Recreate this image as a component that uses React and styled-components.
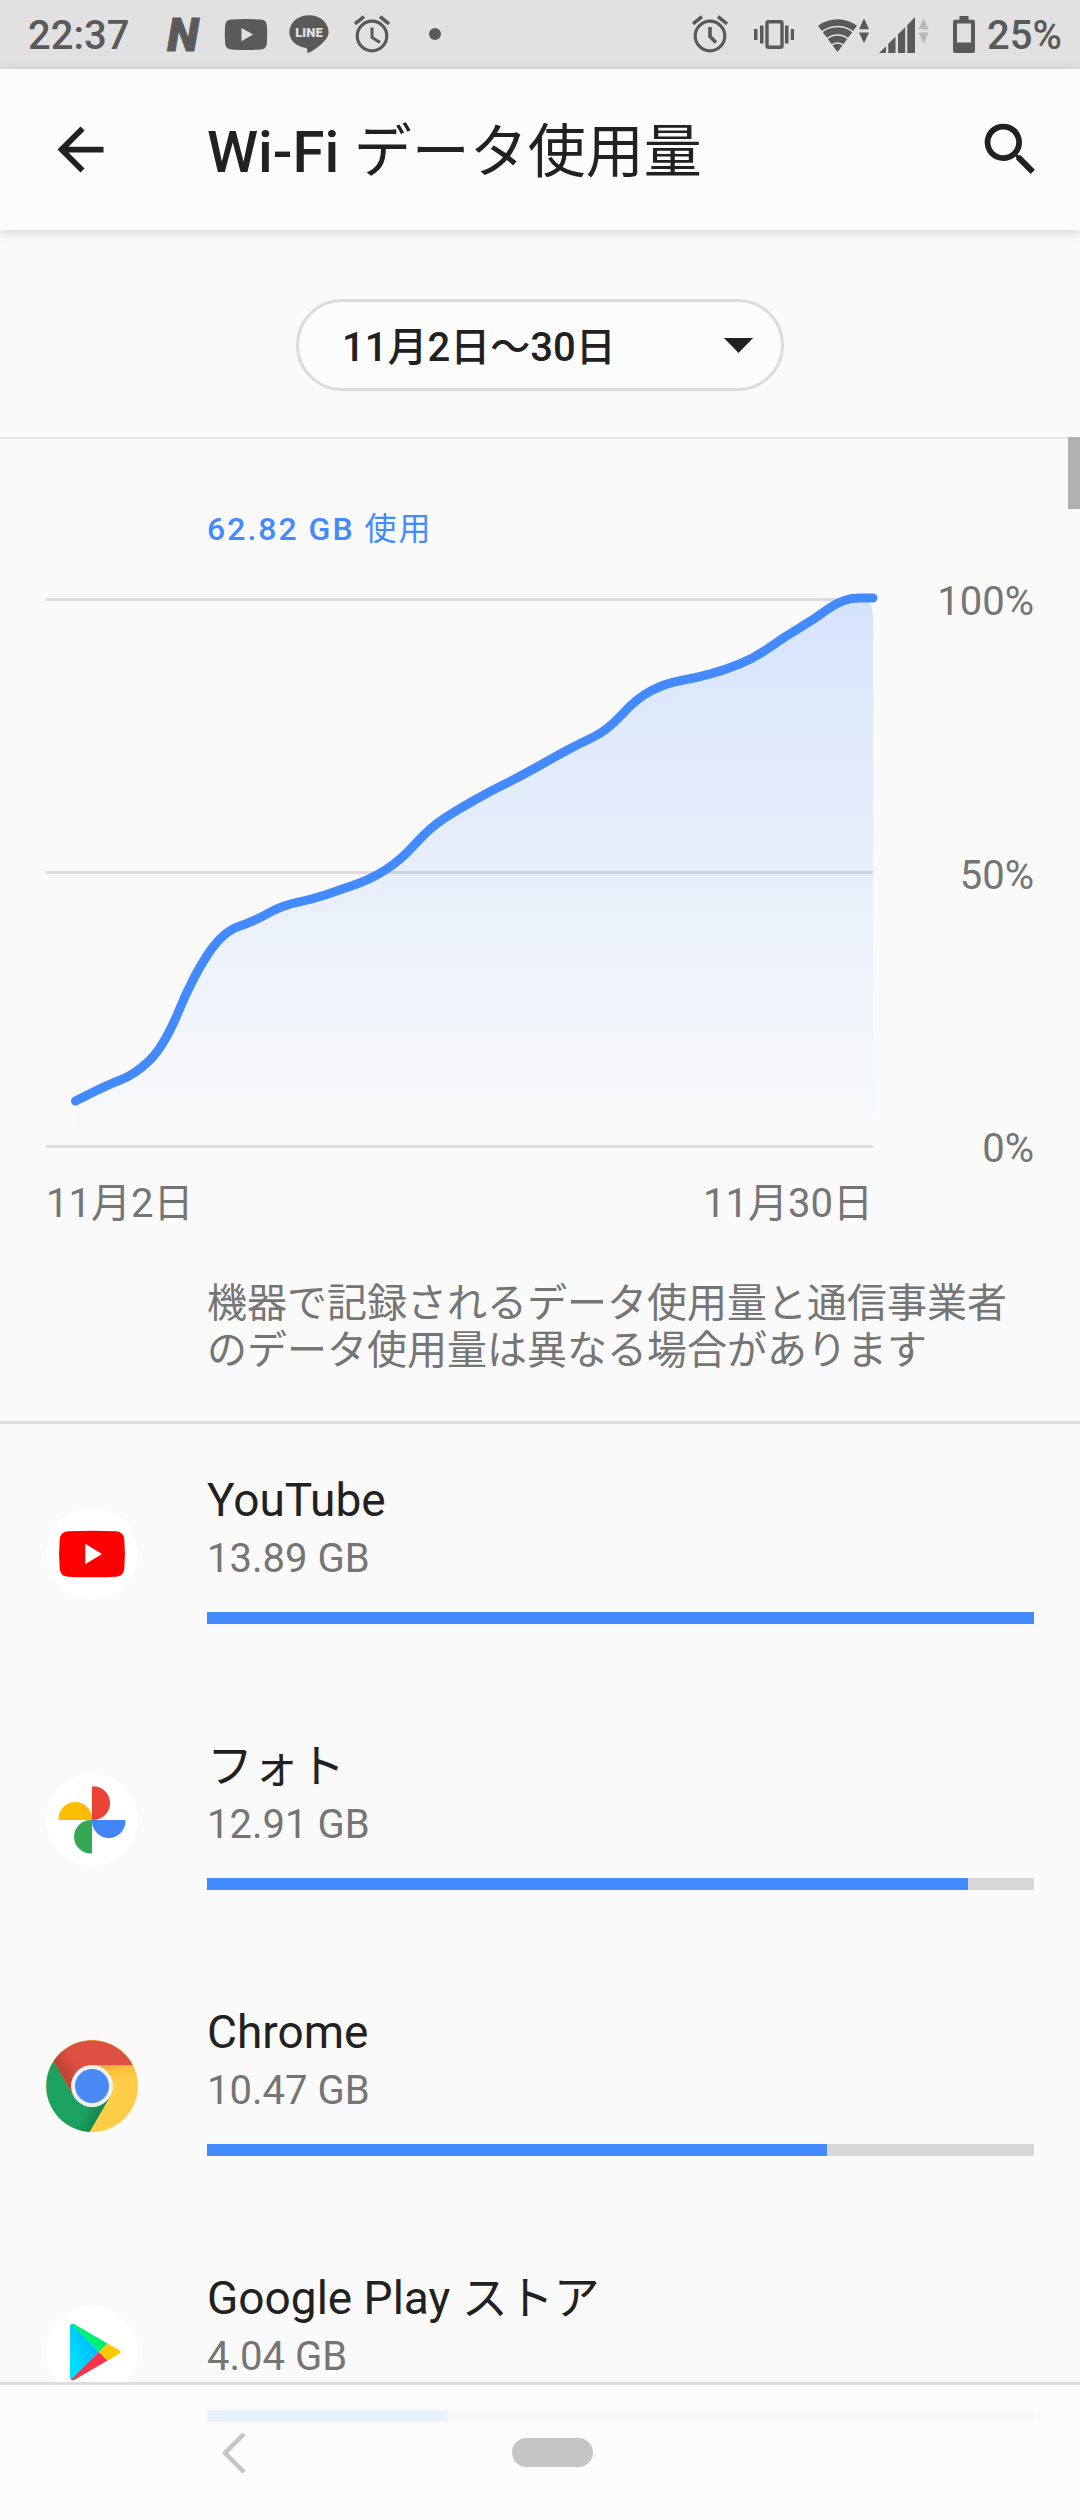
import React from 'react';
import styled, { ThemeProvider, createGlobalStyle } from 'styled-components';

const theme = {
  colors: {
    page: '#fafafa',
    surface: '#fcfcfc',
    statusBar: '#e1e1e1',
    status: '#5a5a5a',
    text: '#212121',
    secondary: '#757575',
    accent: '#448aff',
    divider: '#dcdce0',
    border: '#dcdcdc',
    track: '#d8d8d8',
    nav: '#c5c5c5',
  },
  edge: '46px',
};

const GlobalStyle = createGlobalStyle`
  * {
    box-sizing: border-box;
  }

  body {
    margin: 0;
    background: #fafafa;
    color: #212121;
    font-family: Roboto, 'Noto Sans CJK JP', sans-serif;
    font-size: 40px;
    line-height: 47px;
  }

  svg {
    display: block;
    flex: none;
  }
`;

const Screen = styled.div`
  min-height: 100vh;
  background: ${p => p.theme.colors.page};
`;

/* status bar */

const StatusBar = styled.div`
  display: flex;
  justify-content: space-between;
  align-items: flex-start;
  height: 69px;
  padding: 14px 18px 0 28px;
  background: ${p => p.theme.colors.statusBar};
  color: ${p => p.theme.colors.status};
  font-weight: 500;
  line-height: 44px;
`;

const Notifications = styled.div`
  display: flex;
`;

const Clock = styled.time`
  margin-right: 22px;
`;

const NotificationSlot = styled.span`
  display: flex;
  justify-content: center;
  width: 63px;
`;

const SystemIcons = styled.div`
  display: flex;
  gap: 24px;
`;

const Network = styled.span`
  display: flex;
  gap: 10px;
`;

const Battery = styled.span`
  display: flex;
  gap: 12px;
`;

/* header */

const Header = styled.header`
  position: relative;
  display: flex;
  align-items: flex-start;
  height: 161px;
  padding: 46px 35px 0 ${p => p.theme.edge};
  background: ${p => p.theme.colors.surface};
  box-shadow: 0 2px 10px rgba(0, 0, 0, 0.16);
`;

const IconButton = styled.button`
  flex: none;
  padding: 0;
  border: 0;
  background: none;
  color: ${p => p.theme.colors.text};
`;

const Title = styled.h1`
  flex: 1;
  margin: 0 0 0 92px;
  font-size: 58px;
  font-weight: 500;
  line-height: 74px;
`;

const Kana = styled.span`
  font-weight: 400;
`;

/* billing cycle */

const Cycle = styled.div`
  display: flex;
  justify-content: center;
  padding: 69px 0 46px;
  border-bottom: 2px solid #e8e8e8;
`;

const SelectWrap = styled.label`
  position: relative;
  width: 488px;

  svg {
    position: absolute;
    top: 39px;
    right: 31px;
    pointer-events: none;
  }
`;

const Select = styled.select`
  appearance: none;
  display: block;
  width: 100%;
  height: 92px;
  padding: 4px 80px 0 43px;
  border: 3px solid ${p => p.theme.colors.border};
  border-radius: 46px;
  background: ${p => p.theme.colors.surface};
  color: ${p => p.theme.colors.text};
  font: inherit;
  font-weight: 500;
`;

/* usage */

const Content = styled.main`
  position: relative;
`;

const ScrollThumb = styled.div`
  position: absolute;
  top: -2px;
  right: 0;
  width: 12px;
  height: 72px;
  background: #b1b1b1;
`;

const Usage = styled.section`
  padding: 71px ${p => p.theme.edge} 47px;
  border-bottom: 3px solid ${p => p.theme.colors.divider};
  color: ${p => p.theme.colors.secondary};
`;

const Total = styled.h2`
  margin: 0 0 30px 161px;
  color: ${p => p.theme.colors.accent};
  font-size: 32px;
  font-weight: 500;
  line-height: 38px;
  letter-spacing: 2px;
`;

const ChartGrid = styled.div`
  display: grid;
  grid-template-columns: 1fr 161px;
  row-gap: 8px;
`;

const Plot = styled.div`
  padding: 20px 0 24px;

  svg {
    width: 100%;
    height: auto;
    overflow: visible;
  }
`;

const Scale = styled.div`
  display: flex;
  flex-direction: column;
  justify-content: space-between;
  text-align: right;
`;

const Dates = styled.div`
  display: flex;
  justify-content: space-between;
`;

const Note = styled.p`
  margin: 53px 0 0 161px;
`;

/* app list */

const AppList = styled.ul`
  margin: 0;
  padding: 0;
  list-style: none;
`;

const AppRow = styled.li`
  display: grid;
  grid-template-columns: 92px 1fr;
  column-gap: 69px;
  padding: 49px ${p => p.theme.edge} 66px;

  > svg {
    margin-top: 35px;
  }
`;

const AppName = styled.h3`
  margin: 0 0 8px;
  font-size: 46px;
  font-weight: 400;
  line-height: 54px;
`;

const AppUsage = styled.p`
  margin: 0 0 30px;
  color: ${p => p.theme.colors.secondary};
`;

const Track = styled.div`
  height: 12px;
  background: ${p => p.theme.colors.track};
`;

const Fill = styled.div`
  height: 100%;
  background: ${p => p.theme.colors.accent};
`;

/* navigation bar */

const NavBar = styled.nav`
  position: fixed;
  right: 0;
  bottom: 0;
  left: 0;
  display: grid;
  grid-template-columns: repeat(3, 1fr);
  place-items: center;
  height: 138px;
  padding: 0 51px 0 75px;
  border-top: 3px solid ${p => p.theme.colors.border};
  background: rgba(252, 252, 252, 0.9);
  background-clip: padding-box;
`;

const NavButton = styled(IconButton)`
  color: ${p => p.theme.colors.nav};
`;

const HomePill = styled.button`
  width: 81px;
  height: 29px;
  padding: 0;
  border: 0;
  border-radius: 15px;
  background: ${p => p.theme.colors.nav};
`;

/* icons */

const GlyphSvg = styled.svg`
  overflow: visible;
`;

const AlarmIcon = ({ hands, weight = 3 }) => (
  <svg width="40" height="40" viewBox="0 0 40 40" fill="none" stroke="currentColor">
    <circle cx="20" cy="22" r="14.8" strokeWidth="3.2" />
    <path d="M3 9.8l9-7.2M28 2.6l9 7.2" strokeWidth="3.6" />
    <path d={hands} strokeWidth={weight} />
  </svg>
);

const NewsIcon = () => (
  <GlyphSvg width="44" height="40" viewBox="0 0 44 40" fill="currentColor">
    <text
      x="22"
      y="37"
      textAnchor="middle"
      fontFamily="Roboto"
      fontSize="46"
      fontWeight="900"
      fontStyle="italic"
      stroke="currentColor"
    >
      N
    </text>
  </GlyphSvg>
);

const VideoIcon = () => (
  <svg width="44" height="40" viewBox="0 0 44 40">
    <path
      fill="currentColor"
      d="M7 5.6q15-1 30 0 5.3.4 5.8 5.4.8 9.5 0 19-.5 5-5.8 5.4-15 1-30 0-5.3-.4-5.8-5.4-.8-9.5 0-19 .5-5 5.8-5.400z"
    />
    <path fill="#e1e1e1" d="M17.5 14v13.2L29 20.6z" />
  </svg>
);

const LineIcon = () => (
  <svg width="40" height="40" viewBox="0 0 40 40">
    <path
      fill="currentColor"
      d="M20 1.2C9.2 1.2.4 8.6.4 18c0 8 6.4 14.4 15.6 15.8 2.4.4 2.7 1.3 2.3 5.4 5-1.6 12.5-7 16.9-12 3-3.2 4.400-5.8 4.400-9.2C39.6 8.600 30.800 1.200 20 1.200z"
    />
    <text x="20" y="23" textAnchor="middle" fill="#e1e1e1" fontFamily="Roboto" fontSize="13" fontWeight="900">
      LINE
    </text>
  </svg>
);

const DotIcon = () => (
  <svg width="12" height="40" viewBox="0 0 12 40" fill="currentColor">
    <circle cx="6" cy="20" r="6" />
  </svg>
);

const VibrateIcon = () => (
  <svg width="40" height="40" viewBox="0 0 40 40" fill="currentColor">
    <rect x="13" y="7.7" width="15" height="25.6" rx="1.5" fill="none" stroke="currentColor" strokeWidth="3.4" />
    <path d="M0 15h3.500v11H0zM6 11.500h3.500v18H6zM31 11.500h3.500v18H31zM36.800 15h3.200v11h-3.200z" />
  </svg>
);

const WifiIcon = () => (
  <svg width="51" height="40" viewBox="0 0 51 40" fill="currentColor">
    <path d="M0 11.8a32.500 32.500 0 0 1 39 0L19.500 38z" />
    <g fill="none" stroke="#e1e1e1" strokeWidth="1.5">
      <circle cx="19.5" cy="38" r="25.5" />
      <circle cx="19.5" cy="38" r="17" />
      <circle cx="19.5" cy="38" r="9" />
    </g>
    <path d="M41 15.300l5-11 5 11zM41 18.500h10l-5 10.800z" />
  </svg>
);

const SignalIcon = () => (
  <svg width="50" height="40" viewBox="0 0 50 40" fill="currentColor">
    <path d="M0 39L7 32.200V39zM9.300 39V29.800l7.200-7V39zM19 39V20.300l7.200-7V39zM28.300 39V11l7.700-8v36z" />
    <path fill="#b8b8b8" d="M39.500 15.300l5-11 5 11zM39.500 18.500h10l-5 10.800z" />
  </svg>
);

const BatteryIcon = () => (
  <svg width="22" height="40" viewBox="0 0 22 40" fill="currentColor">
    <path
      fillRule="evenodd"
      d="M6.500 2h9v3.800h4.500q2 0 2 2V37q0 2-2 2H2q-2 0-2-2V7.800q0-2 2-2h4.500zM4 9.500v19h14v-19z"
    />
  </svg>
);

const BackIcon = () => (
  <svg width="69" height="69" viewBox="0 0 24 24" fill="currentColor">
    <path d="M20 11H7.830l5.590-5.590L12 4l-8 8 8 8 1.410-1.410L7.830 13H20z" />
  </svg>
);

const SearchIcon = () => (
  <svg width="69" height="69" viewBox="0 0 24 24" fill="currentColor">
    <path d="M15.500 14h-.79l-.28-.27A6.471 6.471 0 0 0 16 9.500 6.500 6.500 0 1 0 9.500 16c1.610 0 3.090-.59 4.230-1.570l.27.28v.79l5 4.990L20.490 19l-4.990-5zm-6 0C7.010 14 5 11.990 5 9.500S7.010 5 9.500 5 14 7.010 14 9.500 11.990 14 9.500 14z" />
  </svg>
);

const YouTubeLogo = () => (
  <svg width="92" height="92" viewBox="0 0 92 92">
    <circle cx="46" cy="46" r="46" fill="#fff" />
    <path
      fill="#f00"
      d="M22 23.300q24-1.200 48 0 7.500.4 8.300 8 1.300 14.700 0 29.400-.8 7.600-8.300 8-24 1.200-48 0-7.500-.4-8.300-8-1.300-14.700 0-29.400.8-7.600 8.300-8z"
    />
    <path fill="#fff" d="M39.300 35.700v20.600L56 46z" />
  </svg>
);

const PhotosLogo = () => (
  <svg width="92" height="92" viewBox="0 0 92 92">
    <circle cx="46" cy="46" r="46" fill="#fff" />
    <path fill="#ea4335" d="M46 46V13.500q0-1.200 1.200-1.200a16.850 16.850 0 0 1 0 33.700z" />
    <path fill="#4285f4" d="M46 46h32.300q1.200 0 1.200 1.200a16.750 16.750 0 0 1-33.500 0z" />
    <path fill="#34a853" d="M46 46v32.300q0 1.200-1.200 1.200a16.750 16.750 0 0 1 0-33.500z" />
    <path fill="#fbbc04" d="M46 46H13.700q-1.200 0-1.200-1.200a16.750 16.750 0 0 1 33.500 0z" />
  </svg>
);

const ChromeLogo = () => (
  <svg width="92" height="92" viewBox="0 0 92 92">
    <defs>
      <linearGradient id="chromeRed" gradientUnits="userSpaceOnUse" x1="14" y1="38" x2="36" y2="24">
        <stop offset="0" stopColor="#b8402f" />
        <stop offset="0.8" stopColor="#dc4f41" />
      </linearGradient>
      <linearGradient id="chromeGreen" gradientUnits="userSpaceOnUse" x1="56" y1="78" x2="40" y2="69">
        <stop offset="0" stopColor="#12804a" />
        <stop offset="1" stopColor="#1ba261" />
      </linearGradient>
      <linearGradient id="chromeYellow" gradientUnits="userSpaceOnUse" x1="66" y1="24" x2="69" y2="42">
        <stop offset="0" stopColor="#e5a934" />
        <stop offset="0.4" stopColor="#fbc23c" />
        <stop offset="1" stopColor="#ffcd46" />
      </linearGradient>
    </defs>
    <circle cx="46" cy="46" r="46" fill="url(#chromeYellow)" />
    <path fill="url(#chromeGreen)" d="M7.700 21A46 46 0 0 0 43.500 92l20.700-35.500L46 46l-18.200 10.500z" />
    <path fill="url(#chromeRed)" d="M7.700 21A46 46 0 0 1 86.600 25H46v21l-18.200 10.500z" />
    <circle cx="46" cy="46" r="21" fill="#f1f1f1" />
    <circle cx="46" cy="46" r="17" fill="#4a8af4" />
  </svg>
);

const PlayLogo = () => (
  <svg width="92" height="92" viewBox="0 0 92 92">
    <defs>
      <linearGradient id="playBlue" x1="1" y1="0" x2="0.2" y2="0.8">
        <stop offset="0" stopColor="#00a6ff" />
        <stop offset="1" stopColor="#00dfff" />
      </linearGradient>
    </defs>
    <circle cx="46" cy="46" r="46" fill="#fff" />
    <path fill="url(#playBlue)" d="M24 20q0-2 2-2l27 28-27 28q-2 0-2-2z" />
    <path fill="#00f076" d="M25 18.300q1.500-1.300 4 .3L61.500 37.500 53 46z" />
    <path fill="#f8334a" d="M25 73.700q1.500 1.300 4-.3L61.500 54.500 53 46z" />
    <path fill="#ffc900" d="M61.500 37.500l11 6.300q4 2.200 0 4.500l-11 6.500L53 46z" />
  </svg>
);

/* chart */

// cumulative usage per day, in percent of the total
const usageByDay = [
  8.2, 11, 13, 18.2, 31.2, 39.1, 40.9, 43.9, 45, 46.8, 48.7, 52.1, 58.1, 61.6,
  64.6, 67.3, 70.3, 73.3, 75.8, 81.7, 84.5, 85.4, 86.9, 89.1, 92.9, 96.1, 100, 100,
];

const CHART_WIDTH = 827;
const CHART_HEIGHT = 548;

const points = usageByDay.map((value, i) => [
  (CHART_WIDTH / usageByDay.length) * (i + 1),
  CHART_HEIGHT - (CHART_HEIGHT * value) / 100,
]);

// rounds each corner with a curve between the midpoints of its two segments
const smooth = pts =>
  pts.slice(1, -1).reduce((path, point, i) => {
    const next = pts[i + 2];
    const mid = point.map((v, axis) => (v + next[axis]) / 2);
    return `${path}Q${point} ${mid}`;
  }, `M${pts[0]}`);

const UsageChart = () => {
  const line = smooth(points);

  return (
    <svg viewBox="0 0 827 550" role="img" aria-label="データ使用量">
      <defs>
        <linearGradient id="area" gradientUnits="userSpaceOnUse" x1="0" y1="0" x2="0" y2="548">
          <stop offset="0" stopColor="#448aff" stopOpacity="0.2" />
          <stop offset="1" stopColor="#448aff" stopOpacity="0" />
        </linearGradient>
      </defs>
      <path d="M0 1.5H827M0 274.5H827M0 548.5H827" stroke="#dadbdf" strokeWidth="3" />
      <path d={`${line}Q827 0 827 18V548H${points[0][0]}Z`} fill="url(#area)" />
      <path d={`${line}H827`} fill="none" stroke="#448aff" strokeWidth="9" strokeLinecap="round" />
    </svg>
  );
};

const apps = [
  { name: 'YouTube', usage: '13.89 GB', percent: 100, Logo: YouTubeLogo },
  { name: 'フォト', usage: '12.91 GB', percent: 92, Logo: PhotosLogo },
  { name: 'Chrome', usage: '10.47 GB', percent: 75, Logo: ChromeLogo },
  { name: 'Google Play ストア', usage: '4.04 GB', percent: 29, Logo: PlayLogo },
];

const AppItem = ({ name, usage, percent, Logo }) => (
  <AppRow>
    <Logo />
    <div>
      <AppName>{name}</AppName>
      <AppUsage>{usage}</AppUsage>
      <Track role="progressbar" aria-label={name} aria-valuenow={percent}>
        <Fill style={{ width: `${percent}%` }} />
      </Track>
    </div>
  </AppRow>
);

const App = () => (
  <ThemeProvider theme={theme}>
    <GlobalStyle />
    <Screen lang="ja">
      <StatusBar>
        <Notifications>
          <Clock>22:37</Clock>
          <NotificationSlot>
            <NewsIcon />
          </NotificationSlot>
          <NotificationSlot>
            <VideoIcon />
          </NotificationSlot>
          <NotificationSlot>
            <LineIcon />
          </NotificationSlot>
          <NotificationSlot>
            <AlarmIcon hands="M20 13.5v10l8 5" />
          </NotificationSlot>
          <NotificationSlot>
            <DotIcon />
          </NotificationSlot>
        </Notifications>
        <SystemIcons>
          <AlarmIcon hands="M20 13v9.5l6 6" weight={3.6} />
          <VibrateIcon />
          <Network>
            <WifiIcon />
            <SignalIcon />
          </Network>
          <Battery>
            <BatteryIcon />
            25%
          </Battery>
        </SystemIcons>
      </StatusBar>

      <Header>
        <IconButton aria-label="戻る">
          <BackIcon />
        </IconButton>
        <Title>
          Wi-Fi <Kana>データ使用量</Kana>
        </Title>
        <IconButton aria-label="検索">
          <SearchIcon />
        </IconButton>
      </Header>

      <Cycle>
        <SelectWrap>
          <Select aria-label="期間" defaultValue="nov">
            <option value="nov">11月2日～30日</option>
          </Select>
          <svg width="29" height="15" viewBox="0 0 29 15">
            <path d="M0 0h29L14.500 15z" fill="#212121" />
          </svg>
        </SelectWrap>
      </Cycle>

      <Content>
        <ScrollThumb />
        <Usage>
          <Total>
            62.82 GB <Kana>使用</Kana>
          </Total>
          <ChartGrid>
            <Plot>
              <UsageChart />
            </Plot>
            <Scale>
              <span>100%</span>
              <span>50%</span>
              <span>0%</span>
            </Scale>
            <Dates>
              <span>11月2日</span>
              <span>11月30日</span>
            </Dates>
          </ChartGrid>
          <Note>機器で記録されるデータ使用量と通信事業者のデータ使用量は異なる場合があります</Note>
        </Usage>

        <AppList>
          {apps.map(app => (
            <AppItem key={app.name} {...app} />
          ))}
        </AppList>
      </Content>

      <NavBar>
        <NavButton aria-label="戻る">
          <svg width="24" height="42" viewBox="0 0 24 42" fill="none" stroke="currentColor" strokeWidth="4.5">
            <path d="M22 2L3 21l19 19" />
          </svg>
        </NavButton>
        <HomePill aria-label="ホーム" />
      </NavBar>
    </Screen>
  </ThemeProvider>
);

export default App;
